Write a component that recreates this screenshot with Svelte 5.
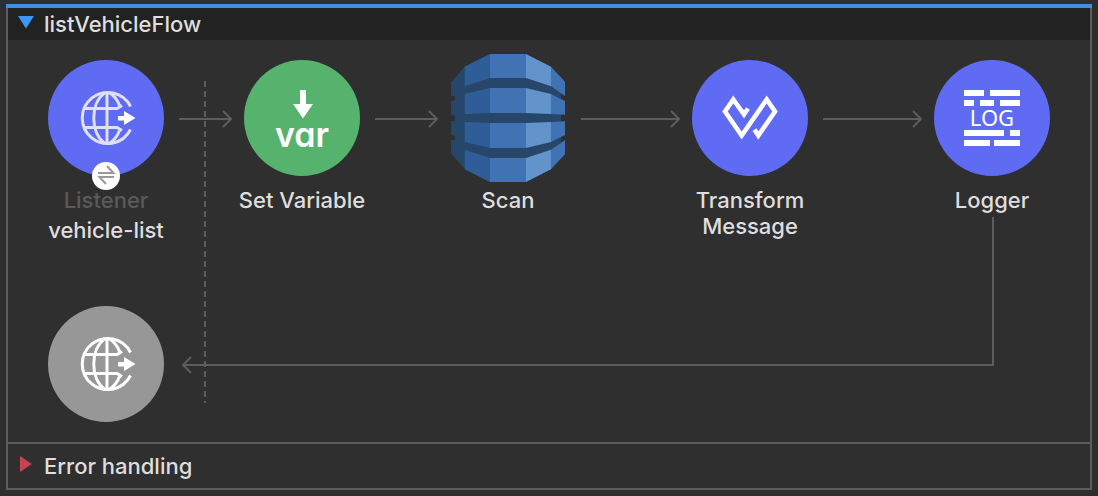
<script>
  const nodes = [
    { id: 'listener', x: 98, y: 20, tone: 'indigo', icon: 'globe', type: 'Listener', label: 'vehicle-list', badge: true },
    { id: 'set-variable', x: 294, y: 20, tone: 'green', icon: 'var', label: 'Set Variable' },
    { id: 'scan', x: 500, y: 20, tone: 'plain', icon: 'database', label: 'Scan' },
    { id: 'transform', x: 742, y: 20, tone: 'indigo', icon: 'weave', label: 'Transform Message' },
    { id: 'logger', x: 984, y: 20, tone: 'indigo', icon: 'log', label: 'Logger' },
    { id: 'response', x: 98, y: 266, tone: 'gray', icon: 'globe' }
  ];

  const arrows = [
    [171, 223],
    [367, 429],
    [573, 671],
    [815, 913]
  ];

  const bars = [
    [30, 30, 20], [56, 30, 30],
    [30, 40, 10], [46, 40, 14], [66, 40, 20],
    [30, 70, 40], [76, 70, 10],
    [30, 80, 26], [60, 80, 26]
  ];

  let open = $state(true);
  let errorOpen = $state(false);
</script>

<main class="page">
  <section class="flow">
    <button class="bar title" aria-expanded={open} onclick={() => (open = !open)}>
      <svg class="mark" width="16" height="16" viewBox="0 0 16 16" aria-hidden="true">
        <path d={open ? 'M0 0H16L8 12.5Z' : 'M2 0L14 8L2 16Z'} fill="#3c96f4" />
      </svg>
      <span>listVehicleFlow</span>
    </button>

    {#if open}
      <div class="canvas">
        <svg class="wires" width="1082" height="402" aria-hidden="true">
          <path d="M197 41V363" stroke-dasharray="6 4" />
          {#each arrows as [from, to]}
            <path d="M{from} 79H{to}M{to - 8} 71L{to} 79L{to - 8} 87" />
          {/each}
          <path d="M985 177V325H175M183 317L175 325L183 333" />
        </svg>

        {#each nodes as node (node.id)}
          <div class="node" style="left: {node.x}px; top: {node.y}px">
            <div class="disc {node.tone}">
              {#if node.icon === 'globe'}
                <svg class="glyph" viewBox="0 0 116 116" aria-hidden="true">
                  <g class="globe">
                    <path d="M82.5 46.5A25.5 25.5 0 1 0 82.5 69.5" />
                    <path d="M59 32V84" />
                    <path d="M57 32.5C42 43 42 73 57 83.5" />
                    <path d="M61 32.5C66 35.5 69.5 40 71.5 45.5M61 83.5C66 80.5 69.5 76 71.5 70.5" />
                    <path d="M36 48.5H69L74 45.5M36 67.5H69L74 70.5" />
                  </g>
                  <path d="M70 56H76V51L87.5 58L76 65V60.5H70Z" fill="#fff" />
                </svg>
              {:else if node.icon === 'var'}
                <svg class="glyph" viewBox="0 0 116 116" aria-hidden="true">
                  <path d="M56 30H62V44H69L59 58.5L49 44H56Z" fill="#fff" />
                  <text class="var" x="58" y="87">var</text>
                </svg>
              {:else if node.icon === 'database'}
                <svg class="database" viewBox="63 27 342 384" aria-hidden="true">
                  <path fill="#264769" d="M180 27H288L363 65L393 110V327L363 372L288 411H180L104 372L63 325V285H75V272L63 269V228H75V210H63V168L75 165V153H63V112L104 65Z" />
                  {#each ['', 'matrix(1 0 0 -1 0 438)'] as flip}
                    <g transform={flip}>
                      <path fill="#2f5d98" d="M104 65L180 27V99L104 124ZM104 147L180 129V204L104 207Z" />
                      <path fill="#4072b4" d="M180 27H288V99H180ZM180 129H288V204H180ZM363 65L405 110V153L363 124ZM363 147L405 168V209L363 207Z" />
                      <path fill="#6293ca" d="M288 27L363 65V124L288 99ZM288 129L363 147V207L288 204Z" />
                    </g>
                  {/each}
                </svg>
              {:else if node.icon === 'weave'}
                <svg class="glyph" viewBox="0 0 116 116" aria-hidden="true">
                  <path d="M56 48.5L52 54.5L41.3 39.5L33 51.5L49.7 75.5L74.7 39.5L83 51.5L66.3 75.5L62.5 69.5" fill="none" stroke="#fff" stroke-width="4.6" />
                  <path d="M48 51.5L51 49L54.5 54L51 56Z" fill="#fff" />
                </svg>
              {:else}
                <svg class="glyph" viewBox="0 0 116 116" aria-hidden="true">
                  {#each bars as [x, y, w]}
                    <rect {x} {y} width={w} height="6" fill="#fff" />
                  {/each}
                  <text class="log" x="58" y="66">LOG</text>
                </svg>
              {/if}
              {#if node.badge}
                <svg class="badge" width="28" height="28" viewBox="0 0 28 28" aria-hidden="true">
                  <circle cx="14" cy="14" r="14" fill="#fff" />
                  <path d="M6 11H21.5L15 4M22 15H7.5L14 22" fill="none" stroke="#999" stroke-width="2" />
                </svg>
              {/if}
            </div>
            {#if node.type}<div class="type">{node.type}</div>{/if}
            {#if node.label}<div class="label">{node.label}</div>{/if}
          </div>
        {/each}
      </div>
    {/if}

    <button class="bar errors" aria-expanded={errorOpen} onclick={() => (errorOpen = !errorOpen)}>
      <svg class="mark" width="16" height="20" viewBox="0 0 16 20" aria-hidden="true">
        <path d={errorOpen ? 'M0 2H16L8 14Z' : 'M2 0L14 8L2 16Z'} fill="#c74352" />
      </svg>
      <span>Error handling</span>
    </button>
  </section>
</main>

<style>
  :global(body) {
    margin: 0;
    background: #2e2e2e;
  }

  .page {
    padding: 4px 6px 6px;
    color: #dedede;
    font-family: Inter, 'Liberation Sans', sans-serif;
    font-size: 22px;
    font-weight: 500;
    line-height: 26px;
  }

  .flow {
    border: 2px solid #5d5d5d;
    border-top: 0;
    background: #2f2f2f;
    position: relative;
    padding-top: 4px;
  }

  .flow::before {
    content: '';
    position: absolute;
    top: 0;
    left: -2px;
    right: -2px;
    height: 4px;
    background: #418ee5;
  }

  .bar {
    display: flex;
    align-items: center;
    gap: 10px;
    width: 100%;
    margin: 0;
    padding: 0 10px;
    border: 0;
    color: inherit;
    font: inherit;
    text-align: left;
    cursor: pointer;
  }

  .title {
    height: 32px;
    background: #222;
  }

  .errors {
    height: 46px;
    border-top: 2px solid #5d5d5d;
    background: #2f2f2f;
  }

  .mark {
    flex: none;
  }

  .canvas {
    position: relative;
    height: 402px;
    overflow: auto hidden;
  }

  .wires {
    display: block;
    fill: none;
    stroke: #5d5d5d;
    stroke-width: 2;
  }

  .node {
    position: absolute;
    width: 160px;
    margin-left: -80px;
    text-align: center;
  }

  .disc {
    position: relative;
    display: grid;
    place-items: center;
    width: 116px;
    height: 116px;
    margin: 0 auto 11px;
    border-radius: 50%;
  }

  .indigo {
    background: #5f6bf2;
    --line: #dfe0fc;
  }

  .green {
    background: #56b36d;
  }

  .gray {
    background: #979797;
    --line: #fff;
  }

  .glyph {
    width: 116px;
    height: 116px;
  }

  .globe {
    fill: none;
    stroke: var(--line);
    stroke-width: 3;
  }

  .database {
    width: 114px;
    height: 128px;
    margin: -6px 0;
  }

  .badge {
    position: absolute;
    left: 44px;
    bottom: -14px;
  }

  .var {
    fill: #fff;
    font: 600 34px Inter, sans-serif;
    font-feature-settings: 'cv11';
    text-anchor: middle;
  }

  .log {
    fill: #fff;
    font: 400 22px 'Noto Sans', sans-serif;
    text-anchor: middle;
  }

  .type {
    margin-bottom: 4px;
    color: #5a5a5a;
  }
</style>
